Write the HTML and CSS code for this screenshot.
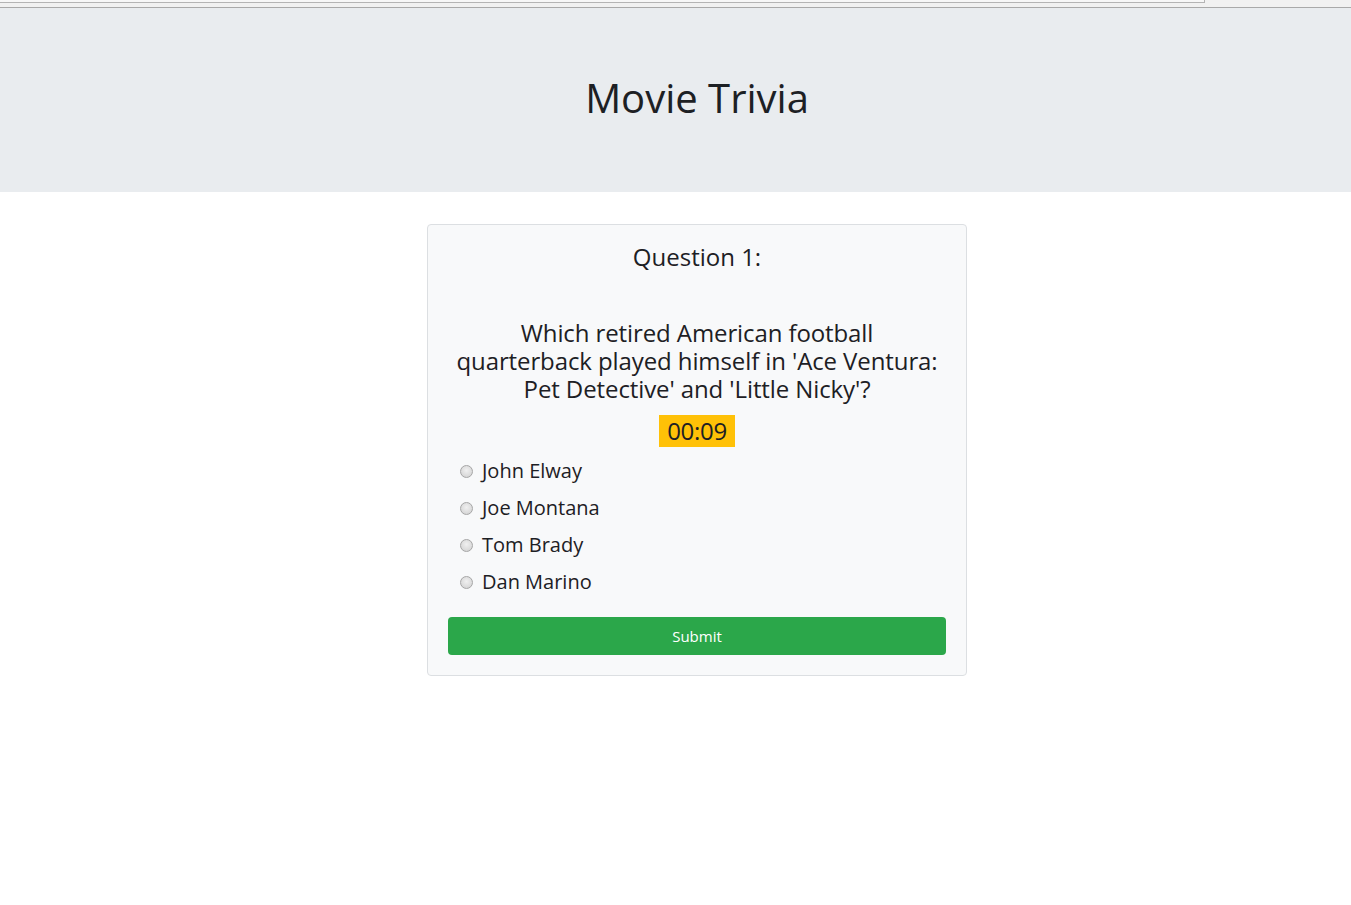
FILE: index.html
```html
<!DOCTYPE html>
<html lang="en">
<head>
<meta charset="utf-8">
<title>Movie Trivia</title>
<link rel="stylesheet" href="styles.css">
</head>
<body>
<div class="scrollbar"><div class="thumb"></div></div>
<div class="page">
  <header class="jumbotron">
    <h1 class="title">Movie Trivia</h1>
  </header>
  <main class="container">
    <section class="card">
      <h4 class="q-number">Question 1:</h4>
      <h4 class="q-text">Which retired American football quarterback played himself in 'Ace Ventura: Pet Detective' and 'Little Nicky'?</h4>
      <div class="timer-row"><span class="timer">00:09</span></div>
      <form class="options">
        <label class="option"><input type="radio" name="answer" class="radio"><span>John Elway</span></label>
        <label class="option"><input type="radio" name="answer" class="radio"><span>Joe Montana</span></label>
        <label class="option"><input type="radio" name="answer" class="radio"><span>Tom Brady</span></label>
        <label class="option"><input type="radio" name="answer" class="radio"><span>Dan Marino</span></label>
        <button type="button" class="btn-submit">Submit</button>
      </form>
    </section>
  </main>
</div>
</body>
</html>
```
FILE: styles.css
```css
html, body {
  margin: 0;
  padding: 0;
  background: #fff;
  overflow: hidden;
}
body {
  font-family: "Open Sans", "Noto Sans", "Liberation Sans", sans-serif;
  color: #1d2024;
}
.scrollbar {
  height: 7px;
  background: #f1f1f1;
  border-bottom: 1px solid #a9a9a9;
}
.thumb {
  width: 1204px;
  height: 2px;
  border-bottom: 1px solid #b4b4b4;
  border-right: 1px solid #b4b4b4;
  background: #f7f7f7;
}
.page {
  width: 1394px;
}
.jumbotron {
  background: #e9ecef;
  padding: 64px 32px;
  margin-bottom: 32px;
  text-align: center;
}
.title {
  margin: 0 0 8px;
  padding-top: 2px;
  height: 46px;
  font-size: 40px;
  line-height: 48px;
  font-weight: 500;
}
.container {
  display: flex;
  justify-content: center;
}
.card {
  box-sizing: border-box;
  width: 540px;
  background: #f8f9fa;
  border: 1px solid #dcdfe2;
  border-radius: 4px;
  padding: 20px;
}
.q-number, .q-text {
  margin: 0;
  font-size: 24px;
  line-height: 28px;
  font-weight: 500;
  text-align: center;
}
.q-number {
  margin-bottom: 46px;
  margin-top: -2px;
  padding-bottom: 2px;
}
.q-text {
  letter-spacing: -0.1px;
  padding: 0 4px;
}
.timer-row {
  display: flex;
  justify-content: center;
  margin-top: 12px;
}
.timer {
  background: #ffc107;
  font-size: 24px;
  line-height: 32px;
  padding: 0 8px;
  letter-spacing: -0.3px;
}
.options {
  display: flex;
  flex-direction: column;
  margin-top: 12px;
}
.option {
  display: flex;
  align-items: center;
  gap: 9px;
  padding-left: 12px;
  font-size: 20px;
  line-height: 24px;
  font-weight: 500;
  margin-bottom: 13px;
}
.radio {
  appearance: none;
  -webkit-appearance: none;
  width: 13px;
  height: 13px;
  margin: 0;
  border-radius: 50%;
  border: 1px solid #a6a6a6;
  background: radial-gradient(circle at 50% 40%, #f0f0f0 0%, #dcdcdc 60%, #cfcfcf 100%);
  box-sizing: border-box;
}
.btn-submit {
  margin-top: 10px;
  height: 38px;
  border: none;
  border-radius: 4px;
  background: #2ba74a;
  color: #fff;
  font-family: inherit;
  font-size: 15px;
}
```
